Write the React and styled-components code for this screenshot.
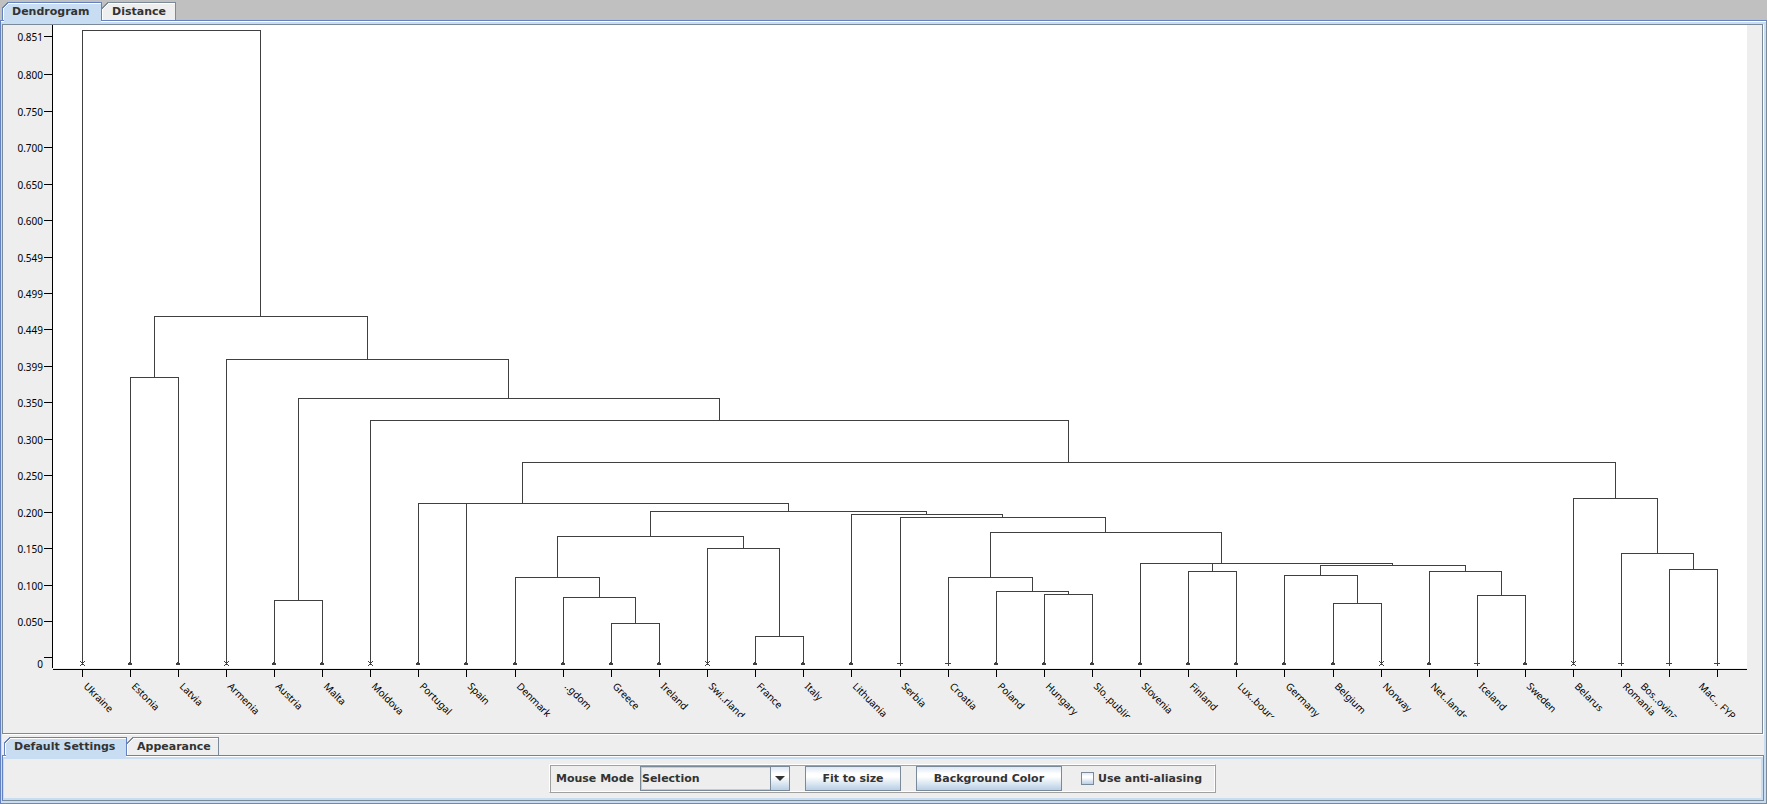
import React, { useState } from "react";
import styled, { createGlobalStyle, css } from "styled-components";

const color = {
  strip: "#c0c0c0",
  panel: "#eeeeee",
  accent: "#6382bf",
  selected: "#c8ddf2",
  focus: "#b8cfe5",
  border: "#7a8a99",
  text: "#333333",
  link: "#404040",
};

const buttonFill =
  "linear-gradient(to bottom, #dde8f3 0%, #ffffff 30%, #ffffff 42%, #b8cfe5 100%)";

const GlobalStyle = createGlobalStyle`
  *, *::before, *::after { box-sizing: border-box; }
  body {
    margin: 0;
    background: ${color.strip};
    color: ${color.text};
    font: bold 11px/16px "DejaVu Sans", sans-serif;
  }
  button, select, input { font: inherit; color: inherit; margin: 0; }
`;

const Page = styled.main`
  display: flex;
  flex-direction: column;
`;

const TabBar = styled.div`
  display: flex;
  align-items: flex-end;
  height: 20px;
  padding-left: 2px;
  background: ${(p) => p.$bg};
`;

const line = (c) => `linear-gradient(${c}, ${c})`;

const Tab = styled.button`
  position: relative;
  height: 18px;
  min-width: ${(p) => p.$width}px;
  padding: 1px 0 0 10px;
  border: 0;
  text-align: left;
  white-space: nowrap;
  ${(p) => {
    const edge = p.$selected ? color.accent : color.border;
    const fill = p.$selected ? color.selected : color.panel;
    return css`
      background:
        linear-gradient(
            135deg,
            ${p.$bg} 4px,
            ${edge} 4px 5px,
            #fff 5px 6px,
            ${fill} 6px
          ) 0 0 / 7px 7px no-repeat,
        ${line(edge)} 100% 0 / 1px 100% no-repeat,
        ${line(edge)} 0 0 / 100% 1px no-repeat,
        ${line("#fff")} 0 1px / 100% 1px no-repeat,
        ${line(p.$selected ? edge : "#fff")} 0 0 / 1px 100% no-repeat,
        ${line(p.$selected ? "#fff" : fill)} 1px 0 / 1px 100% no-repeat,
        ${line(fill)};
    `;
  }}
  ${(p) =>
    p.$selected &&
    css`
      &::after {
        content: "";
        position: absolute;
        left: 2px;
        right: 1px;
        bottom: -2px;
        height: 2px;
        background: ${color.selected};
      }
    `}
`;

const TabPanel = styled.section`
  padding: 3px 2px 2px 1px;
  border: 1px solid ${color.border};
  border-top-color: ${color.accent};
  border-left-color: ${color.accent};
  background: ${color.selected};
  box-shadow: inset 0 1px #fff;
`;

const PanelBody = styled.div`
  background: ${color.panel};
`;

const ChartFrame = styled.div`
  margin: 0 1px 1px 0;
  border: 1px solid ${color.border};
  box-shadow: 1px 1px #fff;
`;

const Chart = styled.svg`
  display: block;
  width: 100%;
  height: auto;
  font: 10px "Noto Sans", sans-serif;
  fill: #000;
`;

const Controls = styled.form`
  display: flex;
  justify-content: center;
  padding: 5px 0;
  background: ${color.panel};
`;

const ControlGroup = styled.div`
  display: flex;
  align-items: center;
  padding: 1px 13px 1px 6px;
  border: 1px solid;
  border-color: #fff #a0a0a0 #a0a0a0 #fff;
  box-shadow: inset 1px 1px #a0a0a0, inset -1px -1px #fff;
`;

const FieldLabel = styled.label`
  width: 84px;
`;

const ComboBox = styled.div`
  display: grid;
  grid-template-columns: 1fr 19px;
  width: 150px;
  height: 25px;
  margin-right: 15px;
`;

const ComboSelect = styled.select`
  grid-area: 1 / 1 / 2 / 3;
  appearance: none;
  padding: 0 20px 0 1px;
  border: 1px solid ${color.border};
  border-radius: 0;
  background: ${color.panel};
  box-shadow: inset 0 0 0 1px ${color.focus};
`;

const ComboArrow = styled.span`
  grid-area: 1 / 2 / 2 / 3;
  display: grid;
  place-items: center;
  border: 1px solid ${color.border};
  background: ${buttonFill};
  pointer-events: none;
  margin-left: -1px;
`;

const PushButton = styled.button`
  height: 25px;
  padding: 0 16px;
  min-width: ${(p) => p.$width}px;
  border: 1px solid ${color.border};
  background: ${buttonFill};
  margin-right: 15px;
`;

const CheckLabel = styled.label`
  display: flex;
  align-items: center;
  gap: 4px;
  margin-left: 4px;
`;

const CheckBox = styled.input`
  appearance: none;
  width: 13px;
  height: 13px;
  border: 1px solid ${color.border};
  background: ${buttonFill};
  &:checked {
    background: ${color.border};
  }
`;

const AXIS = [
  ["0.851", 36], ["0.800", 74], ["0.750", 111], ["0.700", 147], ["0.650", 184],
  ["0.600", 220], ["0.549", 257], ["0.499", 293], ["0.449", 329], ["0.399", 366],
  ["0.350", 402], ["0.300", 439], ["0.250", 475], ["0.200", 512], ["0.150", 548],
  ["0.100", 585], ["0.050", 621],
];

// [name, x, y of the link the leaf hangs from, marker, label shift]
const LEAVES = [
  ["Ukraine", 82, 30, "cross"],
  ["Estonia", 130, 377, "point"],
  ["Latvia", 178, 377, "point"],
  ["Armenia", 226, 359, "cross"],
  ["Austria", 274, 600, "point"],
  ["Malta", 322, 600, "point"],
  ["Moldova", 370, 420, "cross"],
  ["Portugal", 418, 503, "point"],
  ["Spain", 466, 503, "point"],
  ["Denmark", 515, 577, "point"],
  ["..gdom", 563, 597, "point"],
  ["Greece", 611, 623, "point"],
  ["Ireland", 659, 623, "point"],
  ["Swi..rland", 707, 548, "cross"],
  ["France", 755, 636, "point"],
  ["Italy", 803, 636, "point"],
  ["Lithuania", 851, 514, "point"],
  ["Serbia", 900, 517, "plus"],
  ["Croatia", 948, 577, "plus"],
  ["Poland", 996, 591, "point"],
  ["Hungary", 1044, 594, "point"],
  ["Slo..public", 1092, 594, "point"],
  ["Slovenia", 1140, 563, "point"],
  ["Finland", 1188, 571, "point"],
  ["Lux..bourg", 1236, 571, "point"],
  ["Germany", 1284, 575, "point"],
  ["Belgium", 1333, 603, "point"],
  ["Norway", 1381, 603, "cross"],
  ["Net..lands", 1429, 571, "point"],
  ["Iceland", 1477, 595, "plus"],
  ["Sweden", 1525, 595, "point"],
  ["Belarus", 1573, 498, "cross"],
  ["Romania", 1621, 553, "plus"],
  ["Bos..ovina", 1669, 569, "plus", -30],
  ["Mac.., FYR", 1717, 569, "plus", -20],
];

// [left, right, y, stem x, y of the parent link]
const LINKS = [
  [82, 260, 30],
  [154, 367, 316, 260, 30],
  [130, 178, 377, 154, 316],
  [226, 508, 359, 367, 316],
  [298, 719, 398, 508, 359],
  [274, 322, 600, 298, 398],
  [370, 1068, 420, 719, 398],
  [522, 1615, 462, 1068, 420],
  [418, 788, 503, 522, 462],
  [650, 926, 511, 788, 503],
  [557, 743, 536, 650, 511],
  [515, 599, 577, 557, 536],
  [563, 635, 597, 599, 577],
  [611, 659, 623, 635, 597],
  [707, 779, 548, 743, 536],
  [755, 803, 636, 779, 548],
  [851, 1002, 514, 926, 511],
  [900, 1105, 517, 1002, 514],
  [990, 1221, 532, 1105, 517],
  [948, 1032, 577, 990, 532],
  [996, 1068, 591, 1032, 577],
  [1044, 1092, 594, 1068, 591],
  [1140, 1392, 563, 1221, 532],
  [1188, 1236, 571, 1212, 563],
  [1320, 1465, 565, 1392, 563],
  [1284, 1357, 575, 1320, 565],
  [1333, 1381, 603, 1357, 575],
  [1429, 1501, 571, 1465, 565],
  [1477, 1525, 595, 1501, 571],
  [1573, 1657, 498, 1615, 462],
  [1621, 1693, 553, 1657, 498],
  [1669, 1717, 569, 1693, 553],
];

const MARKERS = {
  cross: "M-2 661h1v1h-1zM2 661h1v1h-1zM-1 662h3v1h-3zM0 663h1v1h-1zM-1 664h3v1h-3zM-2 665h1v1h-1zM2 665h1v1h-1z",
  point: "M-1 662h2v1h-2zM-2 663h4v2h-4z",
  plus: "M-3 663h6v1h-6zM0 661h1v5h-1z",
};

const LEAF_END = 662;

function Dendrogram() {
  return (
    <Chart viewBox="3 25 1759 708" role="img" aria-label="Dendrogram">
      <defs>
        <clipPath id="label-area">
          <rect x="53" y="677" width="1694" height="40" />
        </clipPath>
      </defs>
      <rect x="53" y="25" width="1694" height="643" fill="#fff" />
      <g shapeRendering="crispEdges">
        <rect x="52" y="25" width="1" height="643" />
        <rect x="53" y="669" width="1694" height="1" />
        {AXIS.map(([name, y]) => (
          <rect key={name} x="44" y={y} width="8" height="1" />
        ))}
        <rect x="44" y="657" width="8" height="1" />
        {LEAVES.map(([name, x]) => (
          <rect key={name} x={x} y="670" width="1" height="7" />
        ))}
      </g>
      <g textAnchor="end">
        {AXIS.map(([name, y]) => (
          <text key={name} x="43" y={y + 5}>{name}</text>
        ))}
        <text x="43" y="668">0</text>
      </g>
      <g fill={color.link} shapeRendering="crispEdges">
        {LINKS.map(([left, right, y, stem, top]) => (
          <React.Fragment key={`${left}-${y}`}>
            <rect x={left} y={y} width={right - left + 1} height="1" />
            {stem && <rect x={stem} y={top} width="1" height={y - top} />}
          </React.Fragment>
        ))}
        {LEAVES.map(([name, x, y, marker]) => (
          <React.Fragment key={name}>
            <rect x={x} y={y} width="1" height={LEAF_END - y} />
            <path transform={`translate(${x} 0)`} d={MARKERS[marker]} />
          </React.Fragment>
        ))}
      </g>
      <g clipPath="url(#label-area)">
        {LEAVES.map(([name, x, , , shift = 0]) => (
          <text key={name} transform={`translate(${x + shift + 1} 687) rotate(45)`}>
            {name}
          </text>
        ))}
      </g>
    </Chart>
  );
}

function Tabs({ tabs, bg, label }) {
  const [active, setActive] = useState(tabs[0].name);
  return (
    <TabBar role="tablist" aria-label={label} $bg={bg}>
      {tabs.map(({ name, width }) => (
        <Tab
          key={name}
          type="button"
          role="tab"
          aria-selected={name === active}
          $selected={name === active}
          $width={width}
          $bg={bg}
          onClick={() => setActive(name)}
        >
          {name}
        </Tab>
      ))}
    </TabBar>
  );
}

const VIEW_TABS = [
  { name: "Dendrogram", width: 100 },
  { name: "Distance", width: 74 },
];

const SETTINGS_TABS = [
  { name: "Default Settings", width: 123 },
  { name: "Appearance", width: 92 },
];

export default function App() {
  return (
    <>
      <GlobalStyle />
      <Page>
        <Tabs tabs={VIEW_TABS} bg={color.strip} label="Views" />
        <TabPanel>
          <PanelBody>
            <ChartFrame>
              <Dendrogram />
            </ChartFrame>
            <Tabs tabs={SETTINGS_TABS} bg={color.panel} label="Settings" />
            <TabPanel>
              <Controls onSubmit={(e) => e.preventDefault()}>
                <ControlGroup>
                  <FieldLabel htmlFor="mouse-mode">Mouse Mode</FieldLabel>
                  <ComboBox>
                    <ComboSelect id="mouse-mode" defaultValue="Selection">
                      <option>Selection</option>
                    </ComboSelect>
                    <ComboArrow>
                      <svg width="10" height="5" viewBox="0 0 10 5" aria-hidden="true">
                        <path d="M0 0h10L5 5z" fill={color.text} />
                      </svg>
                    </ComboArrow>
                  </ComboBox>
                  <PushButton type="button" $width={96}>Fit to size</PushButton>
                  <PushButton type="button" $width={146}>Background Color</PushButton>
                  <CheckLabel>
                    <CheckBox type="checkbox" />
                    Use anti-aliasing
                  </CheckLabel>
                </ControlGroup>
              </Controls>
            </TabPanel>
          </PanelBody>
        </TabPanel>
      </Page>
    </>
  );
}
